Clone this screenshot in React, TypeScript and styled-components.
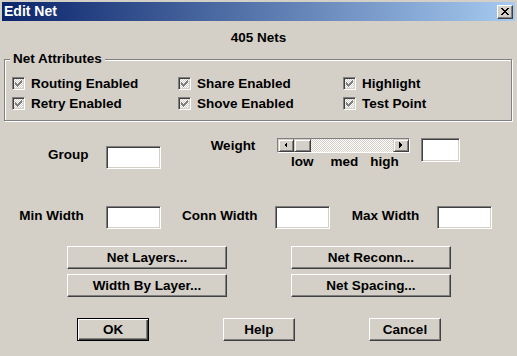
import React from "react";
import styled, { createGlobalStyle } from "styled-components";

const FACE = "#d4d0c8";
const DITHER = `repeating-conic-gradient(#ffffff 0 25%, ${FACE} 0 50%) 0 0 / 2px 2px`;

const Global = createGlobalStyle`
  html, body { margin: 0; padding: 0; background: ${FACE}; }
  body { font-family: "Liberation Sans", Arial, sans-serif; }
`;

const Window = styled.div`
  width: 517px;
  height: 356px;
  box-sizing: border-box;
  padding: 2px 2px 0 2px;
  background: ${FACE};
  display: flex;
  flex-direction: column;
  font: bold 13.5px "Liberation Sans", Arial, sans-serif;
  color: #000;
  overflow: hidden;
`;

const TitleBar = styled.div`
  height: 19px;
  flex: none;
  display: flex;
  align-items: center;
  justify-content: space-between;
  padding: 0 2px;
  background: linear-gradient(to right, #0a246a, #a6caf0);
`;

const Title = styled.span`
  color: #fff;
  font-size: 14px;
  font-weight: bold;
  line-height: 19px;
`;

const raised = `
  box-sizing: border-box;
  border: 1px solid;
  border-color: #ffffff #404040 #404040 #ffffff;
  box-shadow: inset -1px -1px 0 #808080;
  background: ${FACE};
`;

const CloseButton = styled.button`
  ${raised}
  width: 16px;
  height: 14px;
  padding: 0;
  display: flex;
  align-items: center;
  justify-content: center;
`;

const Heading = styled.div`
  margin-top: 9px;
  line-height: 16px;
  text-align: center;
`;

const GroupBox = styled.div`
  margin: 13px 3px 0 2px;
  border: 1px solid #808080;
  box-shadow: 1px 1px 0 #ffffff, inset 1px 1px 0 #ffffff;
  display: flex;
  flex-direction: column;
`;

const Legend = styled.span`
  align-self: flex-start;
  margin: -9px 0 0 5px;
  padding: 0 3px;
  line-height: 15px;
  background: ${FACE};
`;

const CheckGrid = styled.div`
  display: grid;
  grid-template-columns: 166px 165px 1fr;
  grid-auto-rows: 13px;
  row-gap: 7px;
  margin-top: 11px;
  padding: 0 0 10px 7px;
`;

const CheckItem = styled.label`
  display: flex;
  align-items: center;
  gap: 6px;
  line-height: 13px;
  white-space: nowrap;
`;

const CheckBox = styled.span`
  width: 13px;
  height: 13px;
  box-sizing: border-box;
  border: 1px solid;
  border-color: #808080 #ffffff #ffffff #808080;
  box-shadow: inset 1px 1px 0 #404040, inset -1px -1px 0 ${FACE};
  background: ${DITHER};
  display: flex;
  align-items: center;
  justify-content: center;
`;

const FieldRow = styled.div<{ $top: number; $align: string }>`
  display: flex;
  align-items: ${(p) => p.$align};
  margin-top: ${(p) => p.$top}px;
`;

const FieldLabel = styled.span<{
  $left: number;
  $width: number;
  $top?: number;
  $lift?: number;
  $lineHeight?: number;
}>`
  flex: none;
  width: ${(p) => p.$width}px;
  margin-left: ${(p) => p.$left}px;
  margin-top: ${(p) => p.$top ?? 0}px;
  margin-bottom: ${(p) => p.$lift ?? 0}px;
  line-height: ${(p) => p.$lineHeight ?? 15}px;
  text-align: center;
  white-space: nowrap;
`;

const TextInput = styled.input<{ $left: number; $width: number; $height?: number; $top?: number }>`
  flex: none;
  box-sizing: border-box;
  width: ${(p) => p.$width}px;
  height: ${(p) => p.$height ?? 23}px;
  margin: ${(p) => p.$top ?? 0}px 0 0 ${(p) => p.$left}px;
  padding: 0 3px;
  border: 1px solid;
  border-color: #808080 #ffffff #ffffff #808080;
  box-shadow: inset 1px 1px 0 #404040, inset -1px -1px 0 ${FACE};
  background: #fff;
  outline: none;
  font: inherit;
`;

const WeightControl = styled.div`
  flex: none;
  margin-left: 20px;
  width: 133px;
  display: flex;
  flex-direction: column;
`;

const ScrollBar = styled.div`
  height: 15px;
  box-sizing: border-box;
  border: 1px solid;
  border-color: #808080 #ffffff #ffffff #808080;
  display: flex;
`;

const scrollPart = `
  box-sizing: border-box;
  height: 13px;
  border: 1px solid;
  border-color: ${FACE} #404040 #404040 ${FACE};
  box-shadow: inset 1px 1px 0 #ffffff, inset -1px -1px 0 #808080;
  background: ${FACE};
`;

const ArrowButton = styled.div`
  ${scrollPart}
  width: 16px;
  flex: none;
  display: flex;
  align-items: center;
  justify-content: center;
`;

const Thumb = styled.div`
  ${scrollPart}
  width: 17px;
  flex: none;
`;

const Track = styled.div`
  flex: 1;
  height: 13px;
  background: ${DITHER};
`;

const ScaleRow = styled.div`
  display: flex;
  margin-top: 1px;
  line-height: 15px;
`;

const ScaleTick = styled.span<{ $left: number }>`
  margin-left: ${(p) => p.$left}px;
`;

const ButtonGrid = styled.div`
  display: grid;
  grid-template-columns: 160px 160px;
  grid-auto-rows: 23px;
  column-gap: 64px;
  row-gap: 5px;
  margin: 17px 0 0 65px;
`;

const PushButton = styled.button<{ $default?: boolean }>`
  box-sizing: border-box;
  padding: 0;
  font: inherit;
  color: #000;
  background: ${FACE};
  border: 1px solid;
  border-color: #ffffff #404040 #404040 #ffffff;
  box-shadow: inset -1px -1px 0 #808080;
  ${(p) =>
    p.$default &&
    `
    border-color: #000;
    box-shadow: inset 1px 1px 0 #ffffff, inset -1px -1px 0 #404040, inset -2px -2px 0 #808080;
  `}
`;

const ActionRow = styled.div`
  display: flex;
  gap: 74px;
  margin: 21px 0 0 75px;
`;

const ActionButton = styled(PushButton)`
  width: 72px;
  height: 23px;
`;

const CHECK = [
  "......#",
  ".....##",
  "#...###",
  "##.###.",
  "#####..",
  ".###...",
  "..#....",
];

const CLOSE = [
  "##....##",
  ".##..##.",
  "..####..",
  "...##...",
  "..####..",
  ".##..##.",
  "##....##",
];

function PixelGlyph({ rows, color }: { rows: string[]; color: string }) {
  const w = rows[0].length;
  const h = rows.length;
  const rects: React.ReactNode[] = [];
  rows.forEach((r, y) =>
    r.split("").forEach((c, x) => {
      if (c === "#") rects.push(<rect key={`${x}-${y}`} x={x} y={y} width={1} height={1} />);
    })
  );
  return (
    <svg width={w} height={h} viewBox={`0 0 ${w} ${h}`} shapeRendering="crispEdges" fill={color}>
      {rects}
    </svg>
  );
}

function Arrow({ dir }: { dir: "left" | "right" }) {
  const pts = dir === "left" ? "3,0 0,3 3,6" : "0,0 3,3 0,6";
  return (
    <svg width={4} height={7} viewBox="0 0 4 7" shapeRendering="crispEdges">
      <polygon points={pts} fill="#000" />
    </svg>
  );
}

function Check({ label }: { label: string }) {
  return (
    <CheckItem>
      <CheckBox>
        <PixelGlyph rows={CHECK} color="#808080" />
      </CheckBox>
      {label}
    </CheckItem>
  );
}

export default function App() {
  return (
    <>
      <Global />
      <Window>
        <TitleBar>
          <Title>Edit Net</Title>
          <CloseButton aria-label="Close">
            <PixelGlyph rows={CLOSE} color="#000" />
          </CloseButton>
        </TitleBar>
        <Heading>405 Nets</Heading>
        <GroupBox>
          <Legend>Net Attributes</Legend>
          <CheckGrid>
            <Check label="Routing Enabled" />
            <Check label="Share Enabled" />
            <Check label="Highlight" />
            <Check label="Retry Enabled" />
            <Check label="Shove Enabled" />
            <Check label="Test Point" />
          </CheckGrid>
        </GroupBox>
        <FieldRow $top={17} $align="flex-start">
          <FieldLabel $left={46} $width={38} $top={5} $lineHeight={23}>Group</FieldLabel>
          <TextInput $left={20} $width={55} $top={8} />
          <FieldLabel $left={48} $width={48}>Weight</FieldLabel>
          <WeightControl>
            <ScrollBar>
              <ArrowButton><Arrow dir="left" /></ArrowButton>
              <Thumb />
              <Track />
              <ArrowButton><Arrow dir="right" /></ArrowButton>
            </ScrollBar>
            <ScaleRow>
              <ScaleTick $left={14}>low</ScaleTick>
              <ScaleTick $left={17}>med</ScaleTick>
              <ScaleTick $left={12}>high</ScaleTick>
            </ScaleRow>
          </WeightControl>
          <TextInput $left={11} $width={39} $height={24} />
        </FieldRow>
        <FieldRow $top={37} $align="center">
          <FieldLabel $left={17} $width={65} $lift={4}>Min Width</FieldLabel>
          <TextInput $left={22} $width={55} />
          <FieldLabel $left={21} $width={74} $lift={4}>Conn Width</FieldLabel>
          <TextInput $left={19} $width={55} />
          <FieldLabel $left={21} $width={69} $lift={4}>Max Width</FieldLabel>
          <TextInput $left={17} $width={55} />
        </FieldRow>
        <ButtonGrid>
          <PushButton>Net Layers...</PushButton>
          <PushButton>Net Reconn...</PushButton>
          <PushButton>Width By Layer...</PushButton>
          <PushButton>Net Spacing...</PushButton>
        </ButtonGrid>
        <ActionRow>
          <ActionButton $default>OK</ActionButton>
          <ActionButton>Help</ActionButton>
          <ActionButton>Cancel</ActionButton>
        </ActionRow>
      </Window>
    </>
  );
}
